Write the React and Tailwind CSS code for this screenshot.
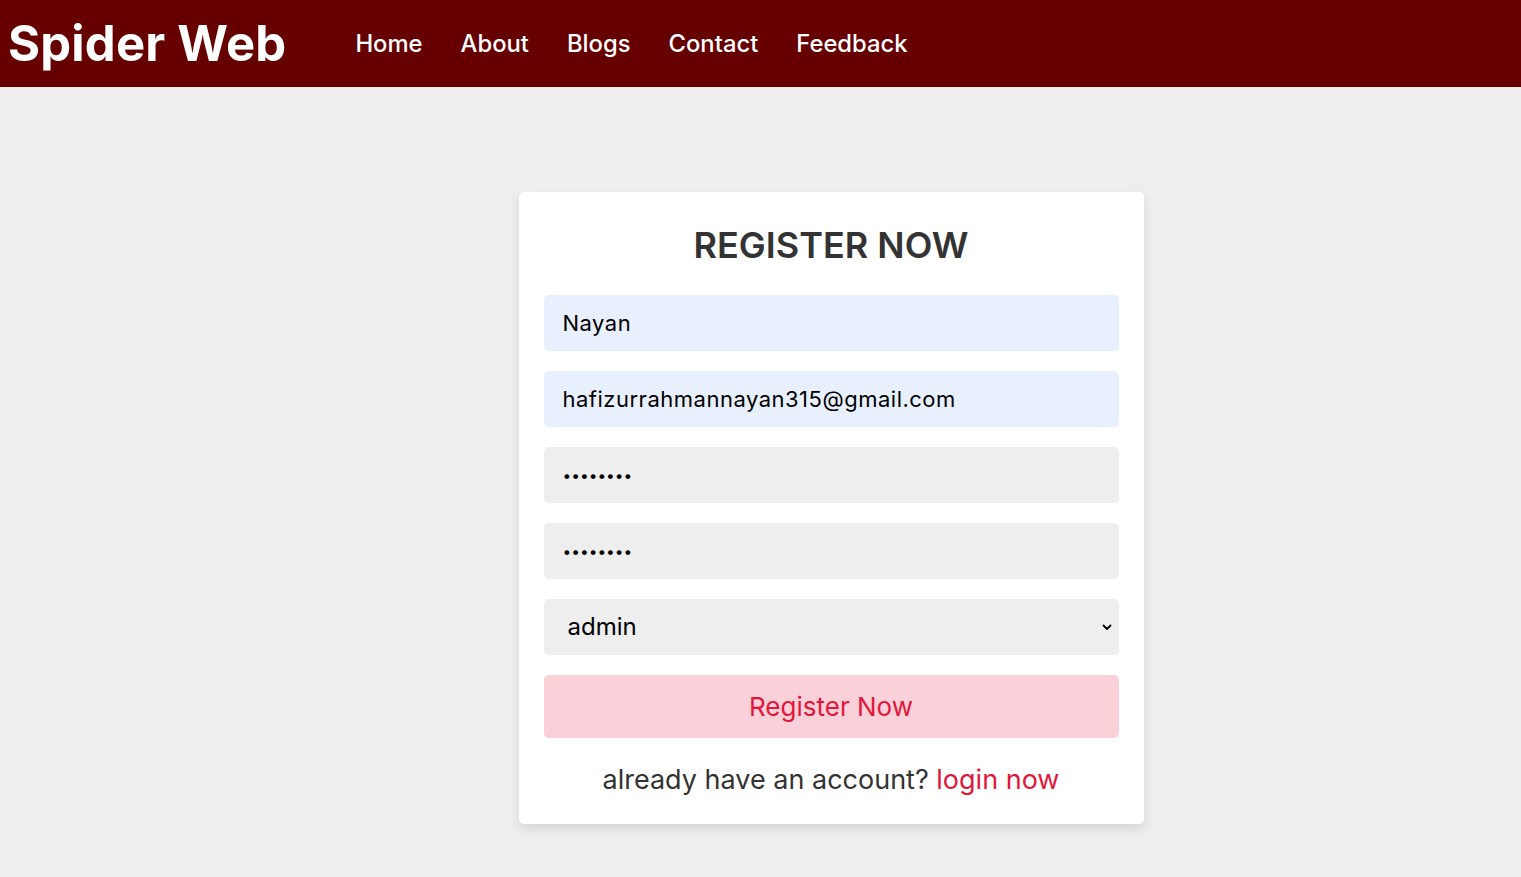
import React from "react";

export default function App() {
  return (
    <div className="min-h-[877px] bg-[#eeeeee] font-['Inter',sans-serif]">
      <header className="h-[87px] bg-[#660000] flex items-center">
        <div className="pl-[8px] text-white text-[49px] font-bold tracking-[0.2px] leading-none">Spider Web</div>
        <nav className="flex items-center gap-[38px] ml-[69px] text-white text-[23.8px] font-medium">
          <a>Home</a>
          <a>About</a>
          <a>Blogs</a>
          <a>Contact</a>
          <a>Feedback</a>
        </nav>
      </header>
      <main className="flex justify-center pt-[105px] pl-[141px]">
        <form className="w-[625px] bg-white rounded-[5px] shadow-[0_5px_10px_rgba(0,0,0,0.1)] px-[25px] pt-[25px] pb-[26px] flex flex-col">
          <h3 className="text-center text-[36px] font-semibold text-[#333333] leading-[56px] mb-[22px]">REGISTER NOW</h3>
          <div className="flex flex-col gap-[20px]">
            <input defaultValue="Nayan" className="h-[56px] rounded-[5px] bg-[#e8f0fe] px-[19px] text-[22px] tracking-[0.5px] text-black outline-none" />
            <input defaultValue="hafizurrahmannayan315@gmail.com" className="h-[56px] rounded-[5px] bg-[#e8f0fe] px-[19px] text-[22px] tracking-[0.5px] text-black outline-none" />
            <input type="password" defaultValue="12345678" className="h-[56px] rounded-[5px] bg-[#eeeeee] px-[19px] text-[15.5px] text-black outline-none" />
            <input type="password" defaultValue="12345678" className="h-[56px] rounded-[5px] bg-[#eeeeee] px-[19px] text-[15.5px] text-black outline-none" />
            <div className="relative">
              <select defaultValue="admin" className="appearance-none w-full h-[56px] rounded-[5px] bg-[#eeeeee] pl-[24px] pr-[40px] text-[24px] text-black outline-none">
                <option value="user">user</option>
                <option value="admin">admin</option>
              </select>
              <svg className="absolute right-[7px] top-[25px] pointer-events-none" width="10" height="7" viewBox="0 0 10 7">
                <path d="M1.5 1.5 L5 5 L8.5 1.5" fill="none" stroke="#000" strokeWidth="1.8" strokeLinecap="round" strokeLinejoin="round" />
              </svg>
            </div>
            <button type="button" className="h-[63px] rounded-[5px] bg-[#fad0d9] text-[#e2173c] text-[26px]">Register Now</button>
          </div>
          <p className="text-center text-[27px] text-[#333333] mt-[24px] leading-[36px]">
            already have an account? <a className="text-[#e2173c]">login now</a>
          </p>
        </form>
      </main>
    </div>
  );
}
